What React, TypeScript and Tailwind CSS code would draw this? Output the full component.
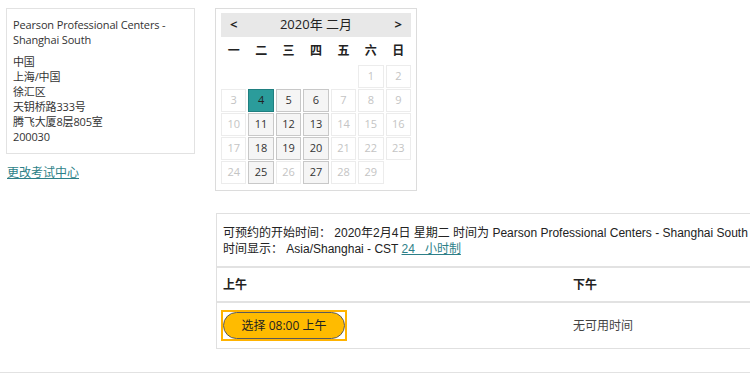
import React from 'react'

const sans = '"Open Sans", "Noto Sans CJK SC", sans-serif'
const arial = '"Liberation Sans", "Noto Sans CJK SC", sans-serif'

type Day = { n?: number; state: 'empty' | 'off' | 'on' | 'sel' }

const weeks: Day[][] = [
    [{ state: 'empty' }, { state: 'empty' }, { state: 'empty' }, { state: 'empty' }, { state: 'empty' }, { n: 1, state: 'off' }, { n: 2, state: 'off' }],
    [{ n: 3, state: 'off' }, { n: 4, state: 'sel' }, { n: 5, state: 'on' }, { n: 6, state: 'on' }, { n: 7, state: 'off' }, { n: 8, state: 'off' }, { n: 9, state: 'off' }],
    [{ n: 10, state: 'off' }, { n: 11, state: 'on' }, { n: 12, state: 'on' }, { n: 13, state: 'on' }, { n: 14, state: 'off' }, { n: 15, state: 'off' }, { n: 16, state: 'off' }],
    [{ n: 17, state: 'off' }, { n: 18, state: 'on' }, { n: 19, state: 'on' }, { n: 20, state: 'on' }, { n: 21, state: 'off' }, { n: 22, state: 'off' }, { n: 23, state: 'off' }],
    [{ n: 24, state: 'off' }, { n: 25, state: 'on' }, { n: 26, state: 'off' }, { n: 27, state: 'on' }, { n: 28, state: 'off' }, { n: 29, state: 'off' }, { state: 'empty' }],
]

const cellCls: Record<Day['state'], string> = {
    empty: '',
    off: 'border border-[#ececec] text-[#c4c4c4] bg-white',
    on: 'border border-[#c8c8c8] bg-[#f5f5f5] text-[#333]',
    sel: 'border border-[#1f7f80] bg-[#2b9c9b] text-[#222]',
}

export default function App() {
    return (
        <div className="w-[750px] h-[382px] overflow-hidden bg-white text-[#333]" style={{ fontFamily: sans }}>
            <div className="flex pt-2">
                {/* Test centre */}
                <div className="w-[189px] ml-[6px] shrink-0">
                    <div className="border border-[#e2e2e2] pl-[6px] pt-[8px] pb-[9px] text-[11px] leading-[15px] tracking-[-0.15px]">
                        <div>Pearson Professional Centers -</div>
                        <div>Shanghai South</div>
                        <div className="mt-[7px]">中国</div>
                        <div>上海/中国</div>
                        <div>徐汇区</div>
                        <div>天钥桥路333号</div>
                        <div>腾飞大厦8层805室</div>
                        <div>200030</div>
                    </div>
                    <a href="#" className="inline-block mt-[11px] ml-px text-[12px] leading-[16px] text-[#2d7f88] underline">更改考试中心</a>
                </div>

                <div className="ml-[20px] flex-1 min-w-0">
                    {/* Calendar */}
                    <div className="w-[202px] border border-[#dcdcdc] px-[5px] pt-[4px] pb-[6px]">
                        <div className="h-[24px] bg-[#e8e8e8] flex items-center justify-between px-[9px] text-[13px] text-[#222]">
                            <span className="font-bold">&lt;</span>
                            <span>2020年 二月</span>
                            <span className="font-bold">&gt;</span>
                        </div>
                        <div className="grid grid-cols-7 gap-x-[2px] h-[28px] items-center text-[12px] font-bold text-[#222]">
                            {['一', '二', '三', '四', '五', '六', '日'].map(d => (
                                <div key={d} className="text-center">{d}</div>
                            ))}
                        </div>
                        <div className="flex flex-col gap-y-px">
                            {weeks.map((w, i) => (
                                <div key={i} className="grid grid-cols-7 gap-x-[2px]">
                                    {w.map((d, j) => (
                                        <div key={j} className={`h-[23px] flex items-center justify-center text-[11px] ${cellCls[d.state]}`}>
                                            {d.n}
                                        </div>
                                    ))}
                                </div>
                            ))}
                        </div>
                    </div>

                    {/* Available times */}
                    <div className="mt-[22px] ml-px w-[560px] border border-[#e0e0e0]" style={{ fontFamily: arial }}>
                        <div className="px-[6px] pt-[11px] pb-[9px] text-[12px] leading-[16px] text-[#222]">
                            <div>可预约的开始时间： 2020年2月4日 星期二 时间为 Pearson Professional Centers - Shanghai South</div>
                            <div>
                                时间显示： Asia/Shanghai - CST{' '}
                                <a href="#" className="text-[#2d7f88] underline">24&nbsp;&nbsp;&nbsp;小时制</a>
                            </div>
                        </div>
                        <div className="flex border-t-2 border-[#e2e2e2] h-[35px] items-center text-[12px] font-bold text-[#222]">
                            <div className="w-[350px] pl-[6px]">上午</div>
                            <div className="pl-[6px]">下午</div>
                        </div>
                        <div className="flex border-t-2 border-[#e2e2e2] h-[47px] items-center text-[12px]">
                            <div className="w-[350px] pl-[4px]">
                                <div className="inline-block border-2 border-[#ffb300]">
                                    <button className="w-[122px] h-[27px] rounded-full bg-[#ffbb00] border border-[#5a5a5a] text-[12px] text-[#222]" style={{ fontFamily: sans }}>
                                        选择 08:00 上午
                                    </button>
                                </div>
                            </div>
                            <div className="pl-[6px] text-[#444]">无可用时间</div>
                        </div>
                    </div>
                </div>
            </div>
            <div className="mt-[23px] border-t border-[#e2e2e2]" />
        </div>
    )
}
